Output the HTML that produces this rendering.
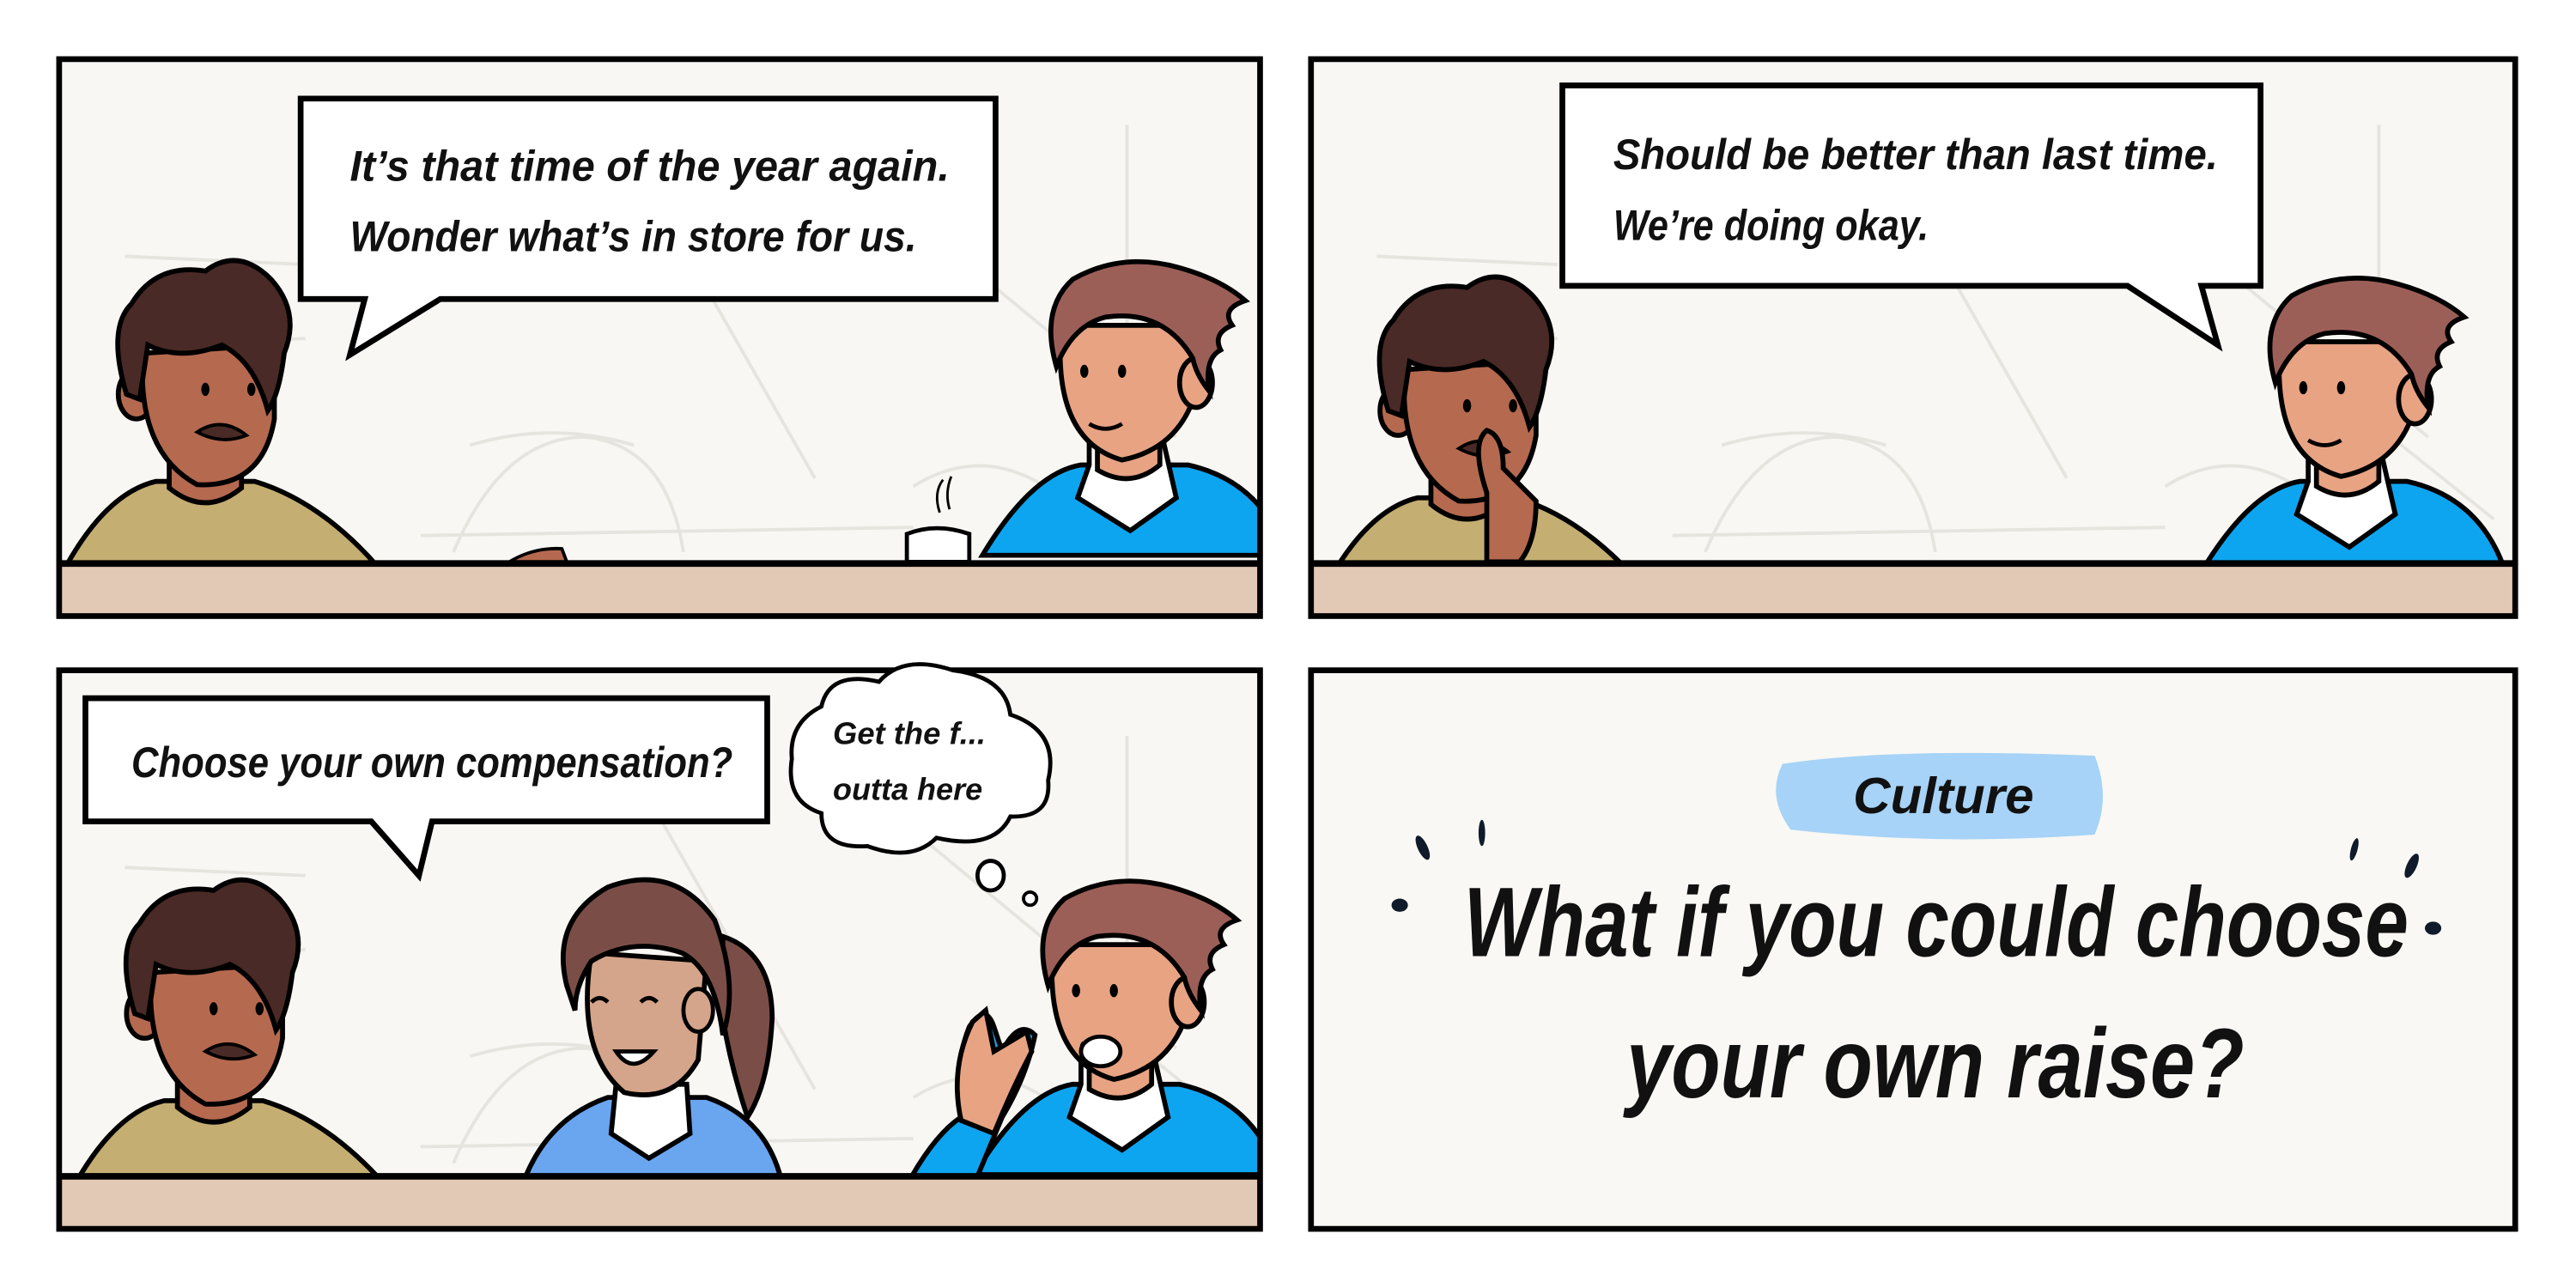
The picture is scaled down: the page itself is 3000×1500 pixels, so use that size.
<!DOCTYPE html>
<html><head><meta charset="utf-8"><style>
html,body{margin:0;padding:0;background:#fff;width:3000px;height:1500px;overflow:hidden}
svg{display:block}
text{font-family:"Liberation Sans",sans-serif;font-style:italic;font-weight:bold;fill:#111}
</style></head><body>
<svg width="3000" height="1500" viewBox="0 0 1568 784" preserveAspectRatio="none" xmlns="http://www.w3.org/2000/svg">
<defs>
<clipPath id="c1"><rect x="36" y="36" width="731" height="339"/></clipPath>
<clipPath id="c2"><rect x="798" y="36" width="733" height="339"/></clipPath>
<clipPath id="c3"><rect x="36" y="408" width="731" height="340"/></clipPath>
<g id="manA">
  <path d="M-85,110 Q-60,65 -30,58 L30,58 Q70,70 105,110 Z" fill="#c4ae72" stroke="#000" stroke-width="3"/>
  <path d="M-22,40 L-22,62 Q0,80 22,62 L22,40 Z" fill="#b5694f" stroke="#000" stroke-width="3"/>
  <ellipse cx="-42" cy="5" rx="11" ry="15" fill="#b5694f" stroke="#000" stroke-width="3"/>
  <path d="M-38,-20 Q-42,40 -5,60 Q35,62 42,20 L42,-25 Z" fill="#b5694f" stroke="#000" stroke-width="3"/>
  <path d="M-48,5 Q-60,-35 -45,-50 Q-30,-75 0,-70 Q20,-85 40,-65 Q58,-45 48,-20 Q45,5 38,15 Q30,-15 10,-25 Q-15,-15 -35,-25 Q-38,-5 -40,8 Z" fill="#4a2a26" stroke="#000" stroke-width="3"/>
  <path d="M-5,28 Q10,18 25,30 Q10,36 -5,28 Z" fill="#4a2a26" stroke="#000" stroke-width="2"/>
  <ellipse cx="0" cy="2" rx="2.5" ry="4"/><ellipse cx="28" cy="2" rx="2.5" ry="4"/>
</g>
<g id="manB">
  <path d="M-90,110 Q-60,60 -30,55 L35,55 Q80,65 95,110 Z" fill="#0ea5f0" stroke="#000" stroke-width="3"/>
  <path d="M-25,40 L-25,55 L-32,75 L0,95 L28,75 L20,40 Z" fill="#fff" stroke="#000" stroke-width="3"/>
  <path d="M-20,30 L-20,58 Q0,70 18,55 L18,30 Z" fill="#e8a383" stroke="#000" stroke-width="3"/>
  <path d="M-42,-30 Q-48,40 -5,52 Q30,45 40,10 L45,-30 Z" fill="#e8a383" stroke="#000" stroke-width="3"/>
  <ellipse cx="40" cy="5" rx="10" ry="15" fill="#e8a383" stroke="#000" stroke-width="3"/>
  <path d="M-45,-5 Q-55,-40 -35,-58 Q-5,-75 30,-65 Q55,-58 70,-45 Q55,-40 62,-30 Q50,-25 55,-15 Q45,-10 48,10 Q40,0 38,-10 Q20,-40 -15,-35 Q-35,-30 -45,-5 Z" fill="#9c5f58" stroke="#000" stroke-width="3"/>
  <ellipse cx="-28" cy="-2" rx="2.5" ry="4"/><ellipse cx="-5" cy="-2" rx="2.5" ry="4"/>
  <path d="M-25,30 Q-15,36 -5,30" fill="none" stroke="#000" stroke-width="2.5"/>
</g>
<g id="bgp">
  <rect x="0" y="0" width="733" height="341" fill="#f8f7f3"/>
  <g fill="none" stroke="#e6e4de" stroke-width="2">
    <path d="M40,120 L150,125 M40,175 L150,170 M250,235 Q300,220 350,235 M240,300 Q270,230 320,230 Q370,235 380,300 M220,290 L520,285 M360,80 L460,255 M520,260 Q560,235 600,260 M450,40 L680,230 M520,40 L520,90 M650,40 L650,200 M620,200 L720,280"/>
  </g>
</g>
</defs>

<rect width="1568" height="784" fill="#fff"/>

<!-- Panel 1 -->
<g clip-path="url(#c1)">
  <g transform="translate(36,36)"><use href="#bgp"/></g>
  <use href="#manA" transform="translate(125,235)"/>
  <use href="#manB" transform="translate(688,228)"/>
  <path d="M552,342 L552,325 Q570,318 590,325 L590,342 Z" fill="#fff" stroke="#000" stroke-width="2.5"/>
  <path d="M572,312 Q568,300 574,292 M578,310 Q575,300 579,290" fill="none" stroke="#000" stroke-width="1.5"/>
  <path d="M310,342 Q325,333 342,334 L345,342 Z" fill="#b5694f" stroke="#000" stroke-width="2"/>
  <rect x="36" y="343" width="732" height="33" fill="#e2c9b6"/>
  <line x1="36" y1="343" x2="768" y2="343" stroke="#000" stroke-width="4"/>
</g>
<rect x="36" y="36" width="731" height="339" fill="none" stroke="#000" stroke-width="3.5"/>
<path d="M183,60 L606,60 L606,182 L268,182 L213,216 L222,182 L183,182 Z" fill="#fff" stroke="#000" stroke-width="3.5"/>
<text x="213" y="110" font-size="26" textLength="365" lengthAdjust="spacingAndGlyphs">It’s that time of the year again.</text>
<text x="213" y="153" font-size="26" textLength="345" lengthAdjust="spacingAndGlyphs">Wonder what’s in store for us.</text>

<!-- Panel 2 -->
<g clip-path="url(#c2)">
  <g transform="translate(798,36)"><use href="#bgp"/></g>
  <use href="#manA" transform="translate(893,245)"/>
  <path d="M905,300 Q895,270 905,262 Q915,265 915,285 L935,305 Q935,330 925,342 L905,342 Z" fill="#b5694f" stroke="#000" stroke-width="3"/>
  <use href="#manB" transform="translate(1430,238)"/>
  <rect x="799" y="343" width="732" height="33" fill="#e2c9b6"/>
  <line x1="799" y1="343" x2="1531" y2="343" stroke="#000" stroke-width="4"/>
</g>
<rect x="798" y="36" width="733" height="339" fill="none" stroke="#000" stroke-width="3.5"/>
<path d="M951,52 L1376,52 L1376,174 L1340,174 L1350,210 L1295,174 L951,174 Z" fill="#fff" stroke="#000" stroke-width="3.5"/>
<text x="982" y="103" font-size="26" textLength="368" lengthAdjust="spacingAndGlyphs">Should be better than last time.</text>
<text x="982" y="146" font-size="26" textLength="192" lengthAdjust="spacingAndGlyphs">We’re doing okay.</text>

<!-- Panel 3 -->
<g clip-path="url(#c3)">
  <g transform="translate(36,408)"><use href="#bgp"/></g>
  <use href="#manA" transform="translate(130,612)"/>
  <path d="M320,716 Q335,680 370,668 L430,668 Q465,680 475,716 Z" fill="#6aa5f0" stroke="#000" stroke-width="3"/>
  <path d="M375,660 L372,690 L395,705 L420,690 L418,660 Z" fill="#fff" stroke="#000" stroke-width="3"/>
  <path d="M440,570 Q470,580 470,620 Q468,660 455,680 Q445,650 440,620 Z" fill="#7a4e47" stroke="#000" stroke-width="3"/>
  <path d="M360,580 Q350,640 380,665 Q410,672 425,645 L430,585 Z" fill="#d4a58a" stroke="#000" stroke-width="3"/>
  <path d="M345,600 Q335,560 370,540 Q410,525 435,560 Q450,600 440,630 Q435,590 415,580 Q385,570 360,585 Q350,600 350,615 Z" fill="#7a4e47" stroke="#000" stroke-width="3"/>
  <ellipse cx="425" cy="615" rx="9" ry="13" fill="#d4a58a" stroke="#000" stroke-width="2.5"/>
  <path d="M375,640 Q385,655 398,640 Z" fill="#fff" stroke="#000" stroke-width="2.5"/>
  <path d="M360,610 Q365,605 370,610 M390,610 Q395,605 400,610" fill="none" stroke="#000" stroke-width="2.5"/>
  <use href="#manB" transform="translate(683,605)"/>
  <path d="M555,716 Q570,690 585,680 Q580,650 590,625 Q600,610 605,625 L610,640 Q620,620 630,630 Q625,655 610,680 L595,716 Z" fill="#0ea5f0" stroke="#000" stroke-width="3"/>
  <path d="M585,682 Q578,650 592,622 L600,615 L605,640 L625,628 L628,640 Q615,665 605,690 Z" fill="#e8a383" stroke="#000" stroke-width="3"/>
  <ellipse cx="670" cy="640" rx="12" ry="9" fill="#fff" stroke="#000" stroke-width="2.5"/>
  <rect x="36" y="716" width="732" height="33" fill="#e2c9b6"/>
  <line x1="36" y1="716" x2="768" y2="716" stroke="#000" stroke-width="4"/>
</g>
<rect x="36" y="408" width="731" height="340" fill="none" stroke="#000" stroke-width="3.5"/>
<path d="M52,425 L467,425 L467,500 L263,500 L255,533 L226,500 L52,500 Z" fill="#fff" stroke="#000" stroke-width="3.5"/>
<text x="80" y="473" font-size="26" textLength="366" lengthAdjust="spacingAndGlyphs">Choose your own compensation?</text>
<path d="M500,430 Q505,408 535,415 Q550,398 580,408 Q612,412 615,435 Q645,445 638,475 Q640,498 615,497 Q605,518 570,510 Q555,525 528,515 Q500,517 500,495 Q478,488 482,462 Q480,440 500,430 Z" fill="#fff" stroke="#000" stroke-width="2.5"/>
<text x="507" y="453" font-size="19" textLength="93" lengthAdjust="spacingAndGlyphs">Get the f...</text>
<text x="507" y="487" font-size="19" textLength="91" lengthAdjust="spacingAndGlyphs">outta here</text>
<ellipse cx="603" cy="533" rx="8" ry="9" fill="#fff" stroke="#000" stroke-width="2.5"/>
<ellipse cx="627" cy="547" rx="4" ry="4" fill="#fff" stroke="#000" stroke-width="2"/>

<!-- Panel 4 -->
<rect x="798" y="408" width="733" height="340" fill="#f9f8f4" stroke="#000" stroke-width="3.5"/>
<path d="M1085,465 Q1150,455 1275,460 Q1285,485 1275,508 Q1180,515 1090,505 Q1075,485 1085,465 Z" fill="#a6d3f7"/>
<text x="1128" y="495" font-size="31" textLength="110" lengthAdjust="spacingAndGlyphs">Culture</text>
<text x="891" y="582" font-size="60" textLength="575" lengthAdjust="spacingAndGlyphs">What if you could choose</text>
<text x="990" y="668" font-size="60" textLength="376" lengthAdjust="spacingAndGlyphs">your own raise?</text>
<g fill="#0f1b2a">
  <ellipse cx="866" cy="516" rx="3" ry="8" transform="rotate(-25 866 516)"/>
  <ellipse cx="902" cy="507" rx="2" ry="8"/>
  <ellipse cx="852" cy="551" rx="5" ry="4"/>
  <ellipse cx="1433" cy="517" rx="2" ry="7" transform="rotate(15 1433 517)"/>
  <ellipse cx="1468" cy="527" rx="3" ry="8" transform="rotate(25 1468 527)"/>
  <ellipse cx="1481" cy="565" rx="5" ry="4"/>
</g>
</svg>
</body></html>
